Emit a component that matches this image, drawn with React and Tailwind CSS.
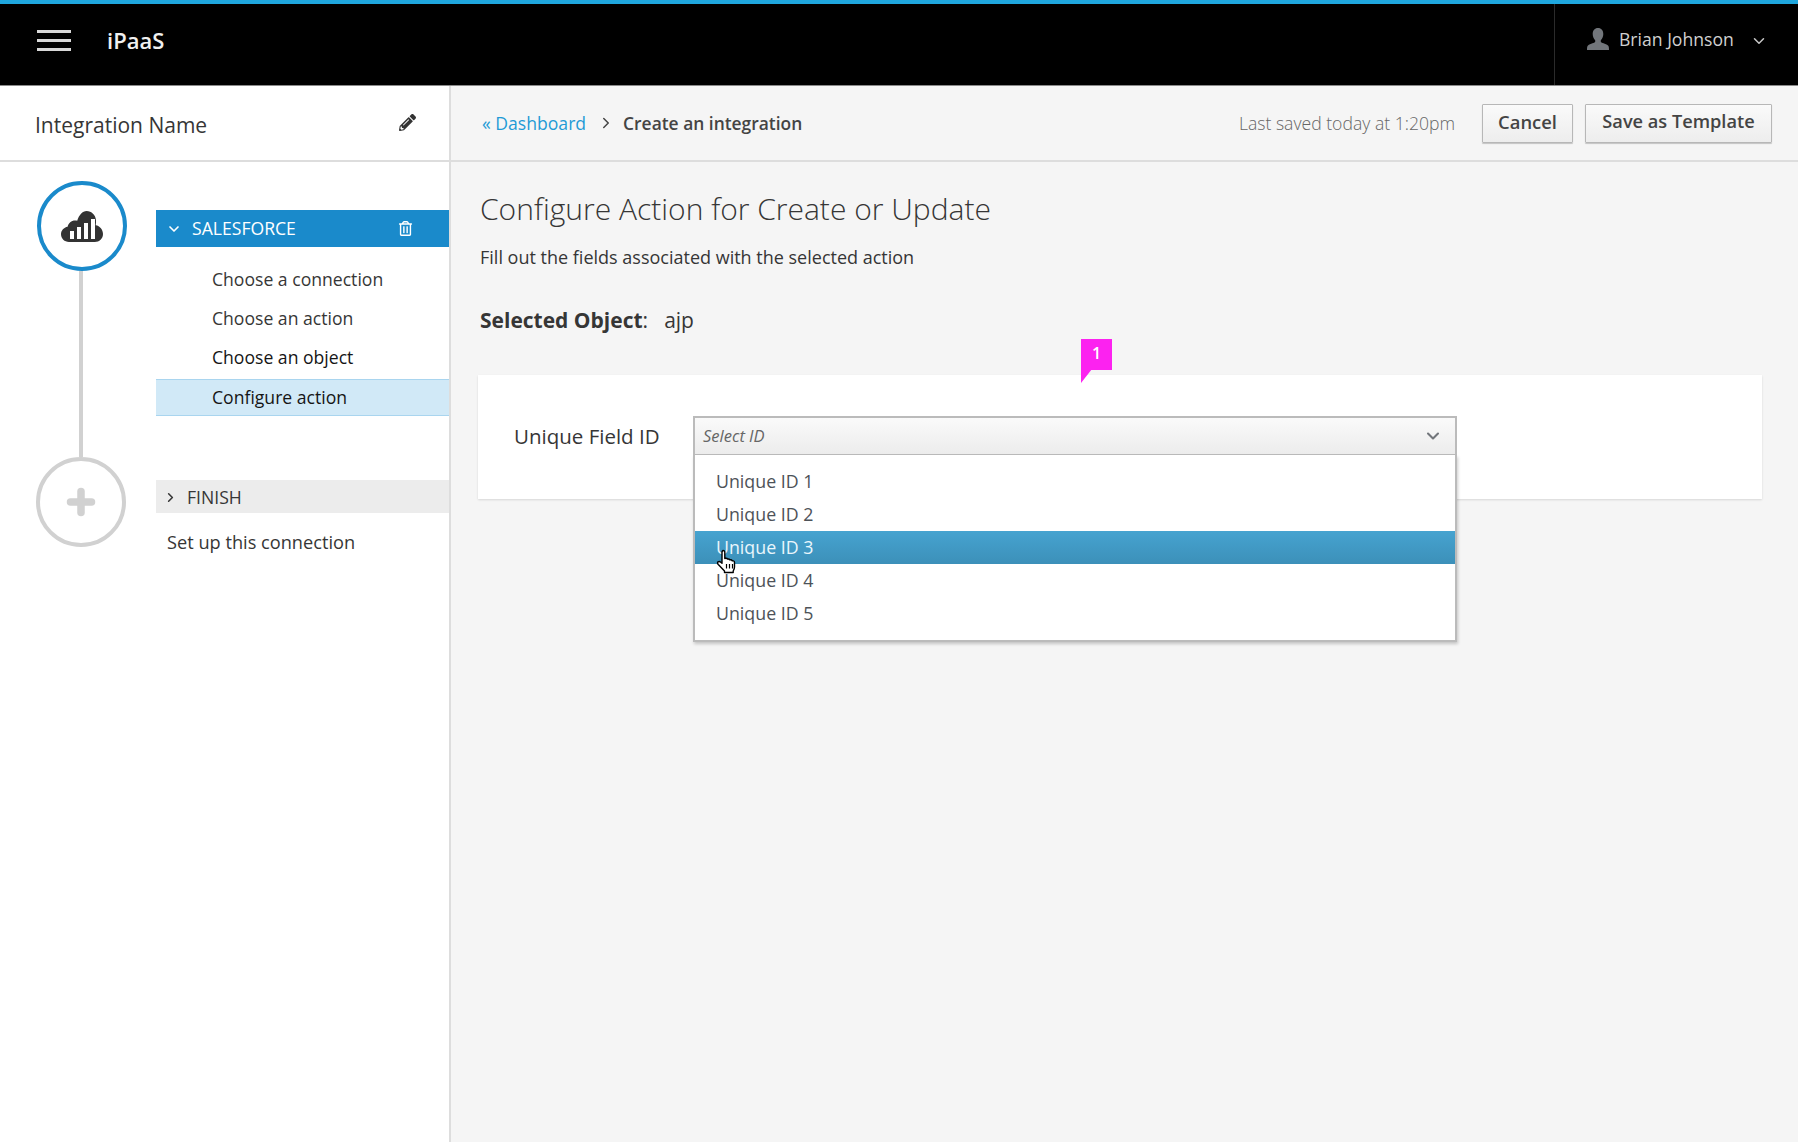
import { ChevronDown, ChevronRight, Plus } from 'lucide-react';
import { FaPencilAlt, FaRegTrashAlt } from 'react-icons/fa';

function CloudIcon() {
  return (
    <svg width="42" height="31" viewBox="0 0 42 31">
      <path d="M8 31C3.5 31 0 27.6 0 23.3c0-3.9 2.9-7 6.6-7.6C7.4 12 10.4 9.400 14 9.400c.8 0 1.500.1 2.200.3C18 4 21.500 0 25.600 0c5 0 9 4 9.400 9.200.1 1.700 0 3.400-.3 5C38.900 14.800 42 18.600 42 23c0 4.500-3.700 8-8.200 8H8z" fill="#333333" />
      <rect x="9" y="20" width="4" height="8" fill="#fff" />
      <rect x="16" y="16" width="4" height="12" fill="#fff" />
      <rect x="23" y="12" width="4" height="16" fill="#fff" />
      <rect x="30" y="8" width="4" height="20" fill="#fff" />
    </svg>
  );
}

function UserIcon() {
  return (
    <svg width="22" height="22" viewBox="0 0 22 22">
      <path d="M11 0c3.300 0 5.300 2.500 5.300 6 0 2.500-1 5-2.500 6.200v1.600c0 1 5 2 7.200 3.700.6.500 1 1.500 1 4.500H0c0-3 .4-4 1-4.500 2.200-1.700 7.200-2.700 7.200-3.700v-1.600C6.700 11 5.700 8.500 5.700 6 5.700 2.500 7.700 0 11 0z" fill="#72767b" />
    </svg>
  );
}

function HandCursor() {
  return (
    <svg width="22" height="25" viewBox="0 0 22 25">
      <path d="M7 1.500c1 0 1.800.7 1.800 1.800v6.200l1-.2c.8-.1 1.500.2 1.800.8.900-.3 1.800 0 2.200.8 1-.3 2 0 2.500.9.800-.2 2.200.2 2.200 1.700v4.500c0 1.700-.6 2.700-1.300 4v1.500H8.500v-1.500L2.300 15.500c-.9-1-1-2-.3-2.600.8-.7 1.900-.5 2.800.3l1.200 1V3.300c0-1 .9-1.800 1-1.800z" fill="#fff" stroke="#000" strokeWidth="1.400" strokeLinejoin="round" />
      <path d="M10.500 15v4.500M13.500 15v4.500M16.500 15v4.500" stroke="#000" strokeWidth="1.200" />
    </svg>
  );
}

const options = ['Unique ID 1', 'Unique ID 2', 'Unique ID 3', 'Unique ID 4', 'Unique ID 5'];

export default function App() {
  return (
    <div className="flex h-[1142px] flex-col overflow-hidden bg-[#f5f5f5] font-['Open_Sans',sans-serif] text-[#363636]">
      {/* Top bar */}
      <header className="flex h-[86px] shrink-0 items-start border-t-4 border-b border-t-[#1fa7de] border-b-[#8a8a8a] bg-black text-white">
        <div className="flex h-[72px] flex-1 items-center pl-[37px]">
          <div className="flex h-[21px] w-[34px] flex-col justify-between">
            <span className="h-[3px] bg-[#d8d8d8]" />
            <span className="h-[3px] bg-[#d8d8d8]" />
            <span className="h-[3px] bg-[#d8d8d8]" />
          </div>
          <span className="ml-[36px] text-[22px] font-semibold leading-none text-[#f0f0f0]">iPaaS</span>
        </div>
        <div className="flex h-[81px] w-[244px] items-start border-l border-[#2b2b2b] pl-[32px] pt-[24px] text-[#d0d0d0]">
          <UserIcon />
          <span className="ml-[10px] text-[17.6px] leading-[23px]">Brian Johnson</span>
          <ChevronDown size={18} strokeWidth={2} className="ml-[16px] mt-[4px] text-[#c8c8c8]" />
        </div>
      </header>

      <div className="flex min-h-0 flex-1">
        {/* Sidebar */}
        <aside className="flex w-[451px] shrink-0 flex-col border-r-2 border-[#dddddd] bg-white">
          <div className="flex h-[76px] shrink-0 items-center justify-between border-b-2 border-[#dddddd] pl-[35px] pr-[33px]">
            <span className="mt-[4px] text-[21px] leading-none">Integration Name</span>
            <FaPencilAlt size={17} className="mb-[1px] text-[#333]" />
          </div>

          <div className="flex pt-[19px]">
            <div className="flex w-[156px] shrink-0 flex-col items-start pl-[37px]">
              <div className="flex h-[90px] w-[90px] items-center justify-center rounded-full border-4 border-[#1a8acb]">
                <CloudIcon />
              </div>
              <span className="ml-[42px] h-[186px] w-[4px] bg-[#d1d1d1]" />
              <div className="-ml-[1px] flex h-[90px] w-[90px] items-center justify-center rounded-full border-4 border-[#d1d1d1]">
                <Plus size={36} strokeWidth={5} className="text-[#d1d1d1]" />
              </div>
            </div>

            <div className="flex min-w-0 flex-1 flex-col pt-[29px]">
              <div className="flex h-[37px] items-center bg-[#1a8acb] pl-[10px] pr-[36px] text-white">
                <ChevronDown size={16} strokeWidth={2.5} />
                <span className="ml-[10px] flex-1 text-[17.6px] leading-none">SALESFORCE</span>
                <FaRegTrashAlt size={15} />
              </div>
              <div className="flex flex-col pt-[13px] text-[17.6px]">
                <div className="flex h-[39px] items-center pl-[56px]">Choose a connection</div>
                <div className="flex h-[39px] items-center pl-[56px]">Choose an action</div>
                <div className="flex h-[39px] items-center pl-[56px] text-[#151515]">Choose an object</div>
                <div className="mt-[2px] flex h-[37px] items-center border-y border-[#a9d5ef] bg-[#d1e9f7] pl-[56px] text-[#151515]">Configure action</div>
              </div>
              <div className="mt-[64px] flex h-[33px] items-center bg-[#ececec] pl-[7px] pt-[2px] text-[17.6px]">
                <ChevronRight size={15} strokeWidth={2.5} />
                <span className="ml-[9px]">FINISH</span>
              </div>
              <div className="mt-[16px] pl-[11px] text-[18.2px] leading-[26px]">Set up this connection</div>
            </div>
          </div>
        </aside>

        {/* Main */}
        <main className="flex min-w-0 flex-1 flex-col">
          <div className="flex h-[76px] shrink-0 items-center border-b-2 border-[#dddddd] pl-[31px] pr-[26px]">
            <span className="text-[17.6px] text-[#1f9bd6]">« Dashboard</span>
            <ChevronRight size={18} strokeWidth={2} className="ml-[11px] text-[#444]" />
            <span className="ml-[8px] text-[17.4px] font-semibold text-[#444]">Create an integration</span>
            <span className="ml-auto text-[17.6px] font-light text-[#666]">Last saved today at 1:20pm</span>
            <button className="ml-[27px] h-[39px] w-[91px] rounded-[1px] border border-[#b7b7b7] bg-gradient-to-b from-[#fafafa] to-[#ededed] pb-[2px] text-[18.4px] font-semibold text-[#444] shadow-[0_1px_1px_rgba(0,0,0,0.2)]">Cancel</button>
            <button className="ml-[12px] h-[39px] w-[187px] rounded-[1px] border border-[#b7b7b7] bg-gradient-to-b from-[#fafafa] to-[#ededed] pb-[2px] text-[18.2px] font-semibold text-[#444] shadow-[0_1px_1px_rgba(0,0,0,0.2)]">Save as Template</button>
          </div>

          <div className="flex flex-col pl-[29px] pr-[36px] pt-[26px]">
            <h1 className="text-[30px] font-light leading-[42px]">Configure Action for Create or Update</h1>
            <p className="mt-[15px] text-[18px] leading-[24px]">Fill out the fields associated with the selected action</p>
            <p className="mt-[37px] text-[21px] leading-[28px]">
              <b className="font-bold">Selected Object</b>:<span className="ml-[16px]">ajp</span>
            </p>

            <div className="relative -ml-[2px] mt-[41px] flex h-[124px] items-start bg-white pl-[36px] pt-[41px] shadow-[0_1px_2px_rgba(0,0,0,0.12)]">
              {/* Marker */}
              <div className="absolute left-[603px] top-[-36px]">
                <div className="flex h-[31px] w-[31px] items-center justify-center bg-[#fc22f0] pb-[3px] text-[16px] font-semibold text-white">1</div>
                <svg width="11" height="14" viewBox="0 0 11 14" className="-mt-px block">
                  <path d="M0 0h11L0 14z" fill="#fc22f0" />
                </svg>
              </div>

              <label className="w-[179px] pt-[6px] text-[20.5px] leading-[28px]">Unique Field ID</label>

              <div className="relative h-[40px] w-[764px]">
                <div className="flex h-[40px] items-center justify-between border-2 border-[#bbbbbb] bg-gradient-to-b from-[#fafafa] to-[#ececec] pl-[8px] pr-[12px]">
                  <span className="text-[16.5px] italic text-[#666]">Select ID</span>
                  <ChevronDown size={20} strokeWidth={2.5} className="text-[#72767b]" />
                </div>
                {/* Open menu */}
                <ul className="absolute left-0 right-0 top-[39px] h-[187px] border-2 border-t-0 border-[#bbbbbb] bg-white pt-[10px] text-[17.8px] text-[#4d5258] shadow-[1px_2px_3px_rgba(0,0,0,0.2)]">
                  {options.map((o) =>
                    o === 'Unique ID 3' ? (
                      <li key={o} className="flex h-[33px] items-center bg-gradient-to-b from-[#46a3d0] to-[#3c90b9] pl-[21px] text-[#eaf6fc]">{o}</li>
                    ) : (
                      <li key={o} className="flex h-[33px] items-center pl-[21px]">{o}</li>
                    )
                  )}
                </ul>
                <div className="absolute left-[23px] top-[133px]">
                  <HandCursor />
                </div>
              </div>
            </div>
          </div>
        </main>
      </div>
    </div>
  );
}
